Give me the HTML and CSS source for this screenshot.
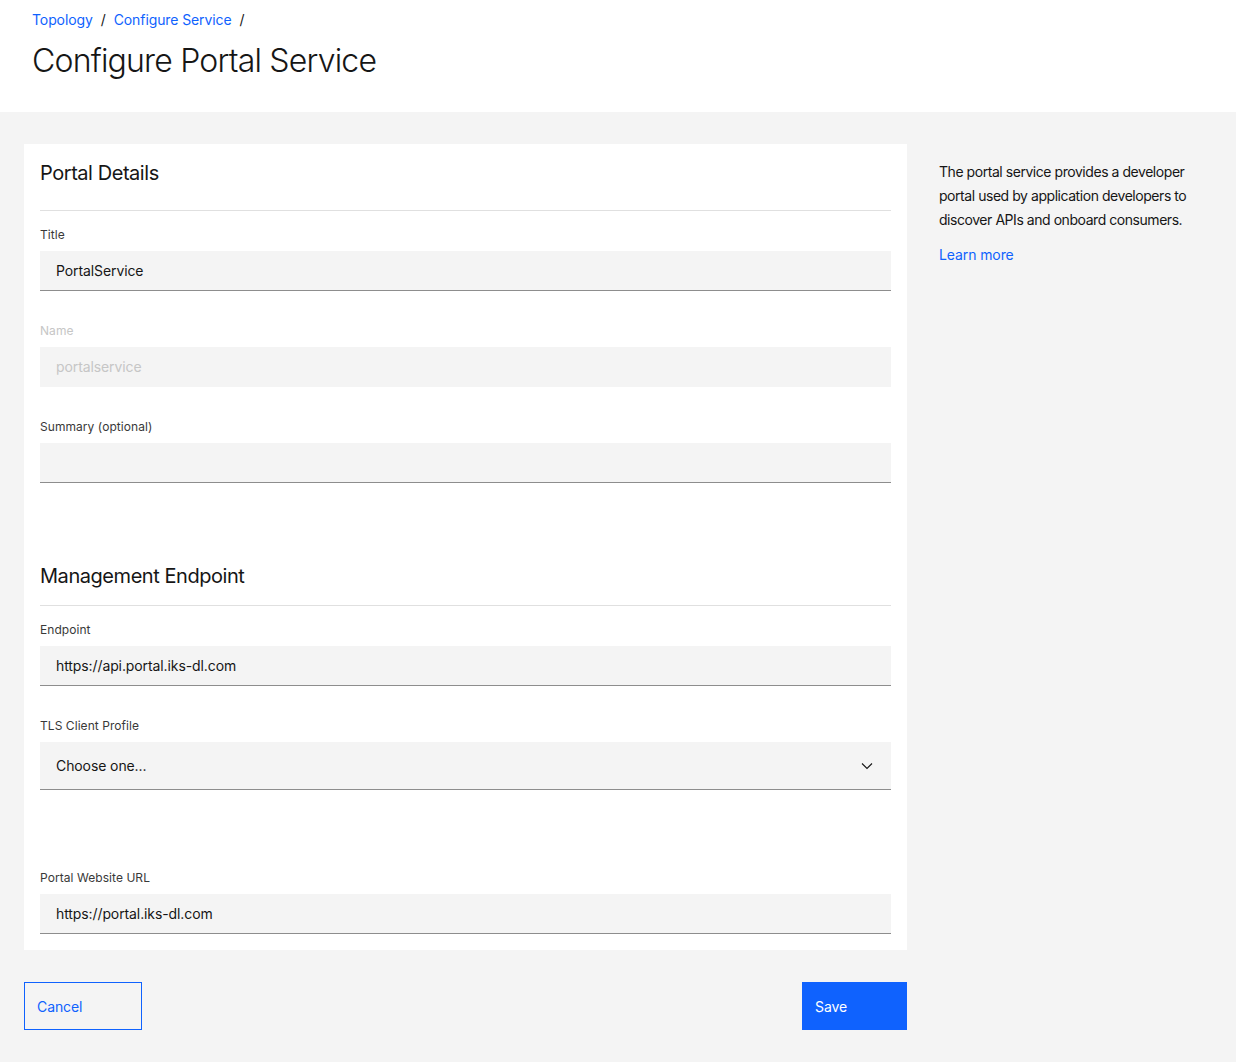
FILE: index.html
```html
<!DOCTYPE html>
<html lang="en">
<head>
<meta charset="utf-8">
<title>Configure Portal Service</title>
<link rel="stylesheet" href="styles.css">
</head>
<body>
<header class="page-header">
  <nav class="breadcrumb">
    <a class="crumb" href="#">Topology</a><span class="sep">/</span>
    <a class="crumb" href="#">Configure Service</a><span class="sep">/</span>
  </nav>
  <h1 class="page-title">Configure Portal Service</h1>
</header>
<main class="content">
  <div class="layout">
    <section class="card">
      <h2 class="section-title">Portal Details</h2>
      <div class="divider"></div>
      <div class="field">
        <label class="label">Title</label>
        <div class="input">PortalService</div>
      </div>
      <div class="field disabled">
        <label class="label">Name</label>
        <div class="input">portalservice</div>
      </div>
      <div class="field">
        <label class="label">Summary (optional)</label>
        <div class="input"></div>
      </div>

      <h2 class="section-title second">Management Endpoint</h2>
      <div class="divider"></div>
      <div class="field">
        <label class="label">Endpoint</label>
        <div class="input">https://api.portal.iks-dl.com</div>
      </div>
      <div class="field">
        <label class="label">TLS Client Profile</label>
        <div class="input select">
          <span>Choose one...</span>
          <svg class="chevron" width="16" height="16" viewBox="0 0 16 16"><path d="M3 5.5 L8 10.5 L13 5.5" fill="none" stroke="#161616" stroke-width="1.1"/></svg>
        </div>
      </div>
      <div class="field url-field">
        <label class="label">Portal Website URL</label>
        <div class="input">https://portal.iks-dl.com</div>
      </div>
    </section>
    <aside class="side">
      <p class="side-text">The portal service provides a developer portal used by application developers to discover APIs and onboard consumers.</p>
      <a class="side-link" href="#">Learn more</a>
    </aside>
    <div class="actions">
      <button class="btn btn-secondary">Cancel</button>
      <button class="btn btn-primary">Save</button>
    </div>
  </div>
</main>
</body>
</html>
```
FILE: styles.css
```css
* { box-sizing: border-box; }
html, body { margin: 0; padding: 0; }
body {
  font-family: "Inter", "Noto Sans", "Liberation Sans", sans-serif;
  color: #161616;
  background: #f4f4f4;
}
.page-header {
  background: #ffffff;
  height: 112px;
  padding: 11px 32px 0;
}
.breadcrumb {
  font-size: 14px;
  line-height: 18px;
  display: flex;
  align-items: center;
  letter-spacing: -0.1px;
}
.crumb { color: #0f62fe; text-decoration: none; }
.sep { color: #161616; margin: 0 8px; }
.page-title {
  margin: 12px 0 0;
  font-size: 32px;
  line-height: 40px;
  font-weight: 300;
  letter-spacing: -0.8px;
}
.content { padding: 32px 24px 32px; }
.layout {
  display: grid;
  grid-template-columns: 883px 1fr;
  grid-template-rows: auto auto;
  row-gap: 32px;
}
.card {
  background: #ffffff;
  padding: 15px 16px 16px;
}
.section-title {
  margin: 0;
  font-size: 20px;
  line-height: 28px;
  font-weight: 400;
  letter-spacing: -0.45px;
}
.section-title.second { margin-top: 79px; }
.divider {
  height: 1px;
  background: #e0e0e0;
  margin-top: 23px;
}
.section-title.second + .divider { margin-top: 15px; }
.field { margin-top: 32px; }
.divider + .field { margin-top: 16px; }
.label {
  display: block;
  font-size: 12px;
  line-height: 16px;
  color: #393939;
  letter-spacing: 0.06px;
  margin-bottom: 8px;
}
.input {
  height: 40px;
  background: #f4f4f4;
  border-bottom: 1px solid #8d8d8d;
  padding: 0 16px;
  font-size: 14px;
  line-height: 39px;
  color: #161616;
  letter-spacing: -0.1px;
}
.select {
  height: 48px;
  line-height: 47px;
  display: flex;
  align-items: center;
  justify-content: space-between;
}
.disabled .label { color: #c6c6c6; }
.disabled .input { color: #c6c6c6; border-bottom-color: transparent; }
.url-field { margin-top: 80px; }
.side { padding: 16px 0 0 32px; }
.side-text {
  margin: 0;
  font-size: 14px;
  line-height: 24px;
  letter-spacing: -0.45px;
  color: #161616;
}
.side-link {
  display: inline-block;
  margin-top: 14px;
  font-size: 14px;
  line-height: 18px;
  color: #0f62fe;
  text-decoration: none;
  letter-spacing: -0.1px;
}
.actions {
  grid-column: 1;
  display: flex;
  justify-content: space-between;
}
.btn {
  height: 48px;
  font-family: inherit;
  font-size: 14px;
  text-align: left;
  padding: 0 12px;
  cursor: pointer;
  border-radius: 0;
  letter-spacing: -0.1px;
}
.btn-secondary {
  width: 118px;
  background: transparent;
  border: 1px solid #0f62fe;
  color: #0f62fe;
}
.btn-primary {
  width: 105px;
  background: #0f62fe;
  border: 1px solid #0f62fe;
  color: #ffffff;
}
```
